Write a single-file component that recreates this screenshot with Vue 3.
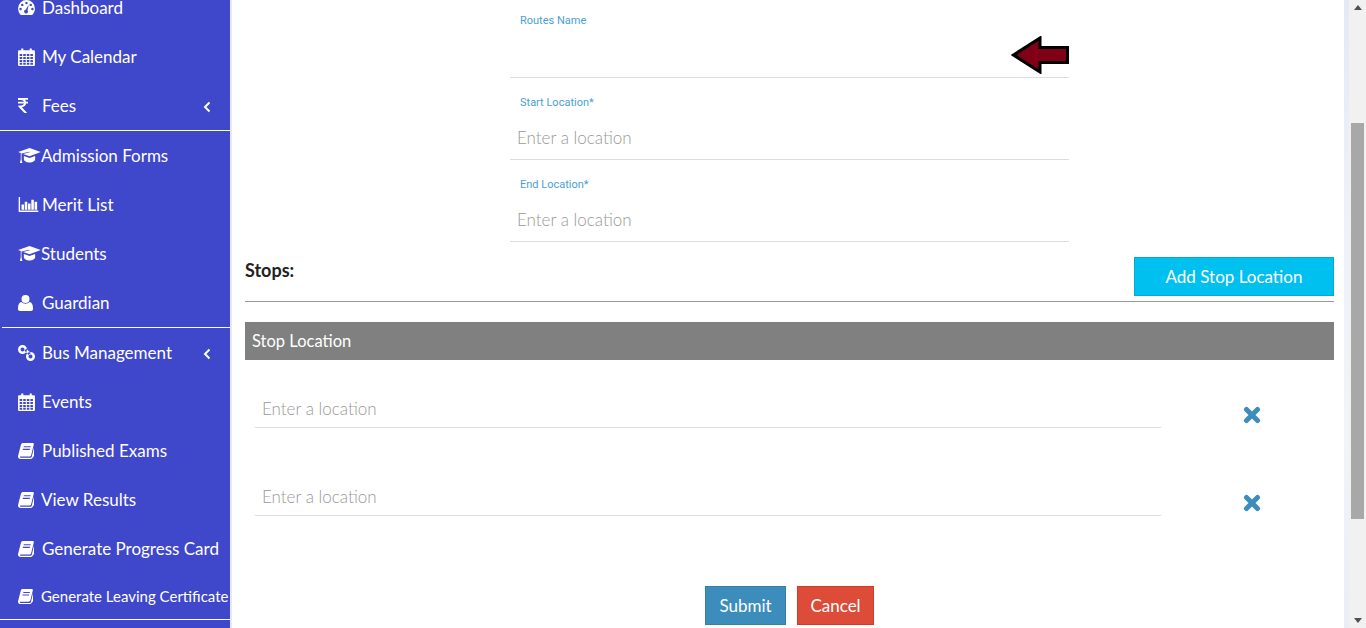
<script setup>
const calendarCells = () => {
  let d = "M1 3h2V1.500h2V3h6V1.500h2V3h2a1 1 0 0 1 1 1v13a1 1 0 0 1-1 1H1a1 1 0 0 1-1-1V4a1 1 0 0 1 1-1z";
  for (let r = 0; r < 4; r += 1) {
    for (let c = 0; c < 4; c += 1) {
      d += `M${1.500 + c * 3.400} ${6.600 + r * 2.800}h2.400v1.900h-2.400z`;
    }
  }
  return d;
};

const icons = {
  dashboard: {
    box: "0 0 18 16",
    d: "M9 0a9 9 0 0 1 9 9c0 2.600-1 4.800-2.600 6.600l-.5.4H3.100l-.5-.4A9 9 0 0 1 0 9a9 9 0 0 1 9-9zM9 2a1.300 1.300 0 1 0 0 2.600A1.300 1.300 0 0 0 9 2zM4.500 3.900a1.300 1.300 0 1 0 0 2.600 1.300 1.300 0 0 0 0-2.600zM13.500 3.900a1.300 1.300 0 1 0 0 2.600 1.300 1.300 0 0 0 0-2.600zM2.700 8.400a1.300 1.300 0 1 0 0 2.600 1.300 1.300 0 0 0 0-2.600zM15.300 8.400a1.300 1.300 0 1 0 0 2.600 1.300 1.300 0 0 0 0-2.600zM11.500 5 8 10.400a2 2 0 1 0 2 .6z",
  },
  calendar: { box: "0 0 16 18", d: calendarCells() },
  rupee: {
    box: "0 0 10 15",
    d: "M0 0h10v1.800H7.100c.5.5.9 1.200 1 2H10v1.800H8.100C7.700 7.800 6 9.100 3.900 9.300L9.200 15H6.400L.4 8.800V7.500h2.700c1.400 0 2.500-.7 2.900-1.900H0V3.800h6C5.600 2.700 4.500 2 3.100 2H0z",
  },
  cap: {
    box: "0 0 24 17",
    d: "M12 0 24 4.300 12 8.800 5.200 6.300 12.200 4.600 11.800 3.900 3.500 5.800 3.500 12 4.400 16 1.800 16 2.700 12 2.700 5.300 0 4.300zM6 8.400l6 2.200 6-2.200v3.600c0 2-3 3.500-6 3.500s-6-1.500-6-3.500z",
  },
  chart: {
    box: "0 0 21 16",
    d: "M0 0h1.500v14.500H21V16H0zM3 8h2.700v5.500H3zM6.500 5h2.700v8.500H6.500zM10 7h2.700v6.500H10zM13.500 3h2.700v10.500h-2.700zM17 5h2.700v8.500H17z",
  },
  user: {
    box: "0 0 15 16",
    d: "M7.500 0a4 4 0 0 1 4 4 4 4 0 0 1-8 0 4 4 0 0 1 4-4zM3.600 7c1 1 2.400 1.700 3.900 1.700S10.400 8 11.400 7C13.700 7.300 15 9.500 15 13v1c0 1.200-.8 2-2 2H2c-1.200 0-2-.8-2-2v-1c0-3.500 1.300-5.700 3.600-6z",
  },
  link: {
    box: "0 0 17 16",
    d: "M4.500 0a4.500 4.500 0 1 1 0 9 4.500 4.500 0 0 1 0-9zM4.500 2.500a2 2 0 1 0 0 4 2 2 0 0 0 0-4zM12.500 7a4.500 4.500 0 1 1 0 9 4.500 4.500 0 0 1 0-9zM12.500 9.500a2 2 0 1 0 0 4 2 2 0 0 0 0-4zM6.500 5.500l1.800-1.800 4.500 4.200-2.300 2z",
  },
  book: {
    box: "0 0 16 16",
    d: "M5 0h9.500c1 0 1.500.8 1.300 1.600L13.200 12c-.2 1-1 1.500-2 1.500H2.500c-.8 0-.8 1.300.2 1.300h10c.5 0 .9-.3 1-.7L16 4.500V13l-1.500 2c-.4.600-1 1-1.800 1H2.500C.8 16-.4 14.400.1 12.700L3 1.600C3.300.6 4 0 5 0zM5.800 3.200l-.3 1.100h7l.3-1.100zM5 5.800l-.3 1.100h7l.3-1.100z",
  },
};

const menu = [
  { label: "Dashboard", icon: "dashboard", w: 17, h: 15, gap: 7 },
  { label: "My Calendar", icon: "calendar", w: 17, h: 19, gap: 7 },
  { label: "Fees", icon: "rupee", w: 10, h: 15, gap: 14, arrow: true, rule: true },
  { label: "Admission Forms", icon: "cap", w: 23, h: 16, gap: 0 },
  { label: "Merit List", icon: "chart", w: 21, h: 15, gap: 3 },
  { label: "Students", icon: "cap", w: 23, h: 16, gap: 0 },
  { label: "Guardian", icon: "user", w: 15, h: 16, gap: 9, rule: true, inset: true },
  { label: "Bus Management", icon: "link", w: 17, h: 16, gap: 7, arrow: true },
  { label: "Events", icon: "calendar", w: 17, h: 19, gap: 7 },
  { label: "Published Exams", icon: "book", w: 16, h: 16, gap: 8 },
  { label: "View Results", icon: "book", w: 16, h: 16, gap: 7 },
  { label: "Generate Progress Card", icon: "book", w: 16, h: 16, gap: 8 },
  { label: "Generate Leaving Certificate", icon: "book", w: 15, h: 15, gap: 8, small: true, rule: true },
];

const fields = [
  { label: "Routes Name", placeholder: "", arrow: true },
  { label: "Start Location*", placeholder: "Enter a location" },
  { label: "End Location*", placeholder: "Enter a location" },
];

const stops = [1, 2];
</script>

<template>
  <div class="page">
    <aside class="sidebar">
      <ul class="menu">
        <li
          v-for="item in menu"
          :key="item.label"
          class="menu-item"
          :class="{ rule: item.rule, inset: item.inset, small: item.small }"
        >
          <svg
            class="menu-icon"
            :width="item.w"
            :height="item.h"
            :viewBox="icons[item.icon].box"
            :style="{ marginRight: item.gap + 'px' }"
          >
            <path :d="icons[item.icon].d" fill="#fff" fill-rule="evenodd" />
          </svg>
          <span class="menu-label">{{ item.label }}</span>
          <svg v-if="item.arrow" class="menu-arrow" width="8" height="12" viewBox="0 0 8 12">
            <path d="M6.500 1.500 2 6l4.500 4.500" fill="none" stroke="#fff" stroke-width="2" />
          </svg>
        </li>
      </ul>
    </aside>

    <main class="content">
      <form class="route-form" @submit.prevent>
        <div v-for="field in fields" :key="field.label" class="field">
          <label class="field-label">{{ field.label }}</label>
          <input class="line-input" type="text" :placeholder="field.placeholder" />
          <svg v-if="field.arrow" class="pointer" width="58" height="38" viewBox="0 0 58 38">
            <path
              d="M2.500 19 29 2v9.500h27.500v15H29V36z"
              fill="#800016"
              stroke="#000"
              stroke-width="3"
            />
          </svg>
        </div>
      </form>

      <div class="stops-head">
        <strong class="stops-title">Stops:</strong>
        <button class="btn btn-add" type="button">Add Stop Location</button>
      </div>

      <div class="stops-table-head">Stop Location</div>

      <div v-for="stop in stops" :key="stop" class="stop-row">
        <input class="line-input stop-input" type="text" placeholder="Enter a location" />
        <svg class="remove" width="18" height="18" viewBox="0 0 18 18">
          <path d="M3.500 3.500 14.500 14.500M14.500 3.500 3.500 14.500" fill="none" stroke="#3c8dbc" stroke-width="5" stroke-linecap="round" />
        </svg>
      </div>

      <div class="actions">
        <button class="btn btn-submit" type="button">Submit</button>
        <button class="btn btn-cancel" type="button">Cancel</button>
      </div>
    </main>

    <div class="strip"></div>

    <div class="scrollbar">
      <span class="tri tri-up"></span>
      <span class="thumb"></span>
      <span class="tri tri-down"></span>
    </div>
  </div>
</template>

<style>
html,
body {
  margin: 0;
  overflow: hidden;
}
</style>

<style scoped>
.page {
  display: flex;
  height: 628px;
  overflow: hidden;
  font-family: Lato, "Liberation Sans", sans-serif;
  background: #fff;
}

.sidebar {
  width: 230px;
  flex: none;
  background: #3f47cb;
  border-right: 2px solid #e6e8f2;
}
.menu {
  list-style: none;
  margin: -17px 0 0;
  padding: 0;
}
.menu-item {
  position: relative;
  display: flex;
  align-items: center;
  box-sizing: border-box;
  height: 49px;
  padding-left: 18px;
  color: #fff;
  font-size: 17px;
  white-space: nowrap;
}
.menu-item.rule {
  height: 50px;
  border-bottom: 1px solid #fff;
}
.menu-item.inset {
  margin-left: 2px;
  padding-left: 16px;
}
.menu-item.small {
  height: 47px;
  font-size: 15px;
}
.menu-icon {
  flex: none;
}
.menu-arrow {
  position: absolute;
  right: 19px;
  top: 20px;
}

.content {
  flex: 1;
  min-width: 0;
  padding: 0 10px 0 13px;
}
.route-form {
  margin: -4px 0 0 265px;
  width: 559px;
}
.field {
  position: relative;
  height: 82px;
  border-bottom: 1px solid #ddd;
  box-sizing: border-box;
  padding-top: 18px;
}
.field-label {
  display: block;
  margin-left: 10px;
  height: 14px;
  line-height: 14px;
  font-family: Roboto, sans-serif;
  font-size: 11px;
  color: #4a9fd4;
}
.line-input {
  display: block;
  width: 100%;
  box-sizing: border-box;
  border: 0;
  outline: 0;
  background: transparent;
  padding: 0 7px;
  font-family: Lato, sans-serif;
  font-weight: 300;
  font-size: 17px;
  height: 34px;
  margin-top: 10px;
  color: #555;
}
.line-input::placeholder {
  color: #999;
  opacity: 1;
}
.pointer {
  position: absolute;
  right: 0;
  top: 40px;
}

.stops-head {
  display: flex;
  justify-content: space-between;
  align-items: flex-start;
  box-sizing: border-box;
  height: 60px;
  border-bottom: 1px solid #999;
  padding-top: 15px;
}
.stops-title {
  font-size: 18px;
  line-height: 26px;
  color: #222;
}
.btn {
  box-sizing: border-box;
  height: 39px;
  border: 1px solid;
  padding: 0;
  font-family: Lato, sans-serif;
  font-size: 17px;
  color: #fff;
}
.btn-add {
  width: 200px;
  background: #00c0ef;
  border-color: #00acd6;
}
.stops-table-head {
  margin-top: 20px;
  height: 38px;
  padding-left: 7px;
  line-height: 38px;
  background: #808080;
  color: #fff;
  font-size: 16.5px;
}
.stop-row {
  display: flex;
  align-items: flex-start;
  height: 88px;
  padding-left: 10px;
}
.stop-input {
  width: 906px;
  margin-top: 32px;
  height: 36px;
  padding-bottom: 2px;
  border-bottom: 1px solid #ddd;
}
.remove {
  margin: 46px 0 0 82px;
}
.actions {
  display: flex;
  justify-content: center;
  gap: 11px;
  margin-top: 50px;
}
.btn-submit {
  width: 81px;
  background: #3c8dbc;
  border-color: #367fa9;
}
.btn-cancel {
  width: 77px;
  background: #dd4b39;
  border-color: #d73925;
}

.strip {
  width: 5px;
  flex: none;
  background: linear-gradient(180deg, #e4e9f5 0%, #eef1f8 35%, #f2f4f9 70%, #eaedf6 100%);
}
.scrollbar {
  width: 17px;
  flex: none;
  display: flex;
  flex-direction: column;
  align-items: center;
  background: #f1f1f1;
}
.thumb {
  width: 13px;
  height: 396px;
  margin-top: 113px;
  background: #a8a8a8;
}
.tri {
  width: 0;
  height: 0;
  border-left: 4px solid transparent;
  border-right: 4px solid transparent;
}
.tri-up {
  margin-top: 5px;
  border-bottom: 5px solid #505050;
}
.tri-down {
  margin-top: 99px;
  border-top: 5px solid #505050;
}
</style>
